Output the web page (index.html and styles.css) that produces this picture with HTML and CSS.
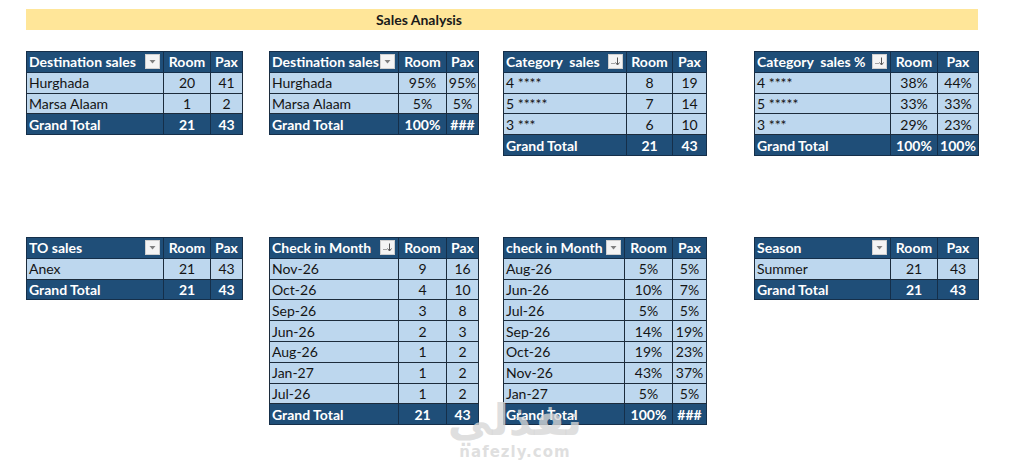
FILE: index.html
```html
<!DOCTYPE html>
<html>
<head>
<meta charset="utf-8">
<link rel="stylesheet" href="styles.css">
</head>
<body>
<div class="page">
  <div class="title"><span>Sales Analysis</span></div>

  <div class="grid top">
    <table class="pv t1">
      <colgroup><col class="c1"><col class="c2"><col class="c3"></colgroup>
      <tr class="hd"><th class="lbl"><div class="hc"><span class="ht">Destination sales</span><span class="btn"><svg width="9" height="6" viewBox="0 0 9 6"><path d="M1.5 1h6L4.5 4.5z" fill="#808080"/></svg></span></div></th><th>Room</th><th>Pax</th></tr>
      <tr><td class="l">Hurghada</td><td>20</td><td>41</td></tr>
      <tr><td class="l">Marsa Alaam</td><td>1</td><td>2</td></tr>
      <tr class="tot"><td class="l">Grand Total</td><td>21</td><td>43</td></tr>
    </table>

    <table class="pv t2">
      <colgroup><col class="c1"><col class="c2"><col class="c3"></colgroup>
      <tr class="hd"><th class="lbl"><div class="hc"><span class="ht">Destination sales</span><span class="btn"><svg width="9" height="6" viewBox="0 0 9 6"><path d="M1.5 1h6L4.5 4.5z" fill="#808080"/></svg></span></div></th><th>Room</th><th>Pax</th></tr>
      <tr><td class="l">Hurghada</td><td>95%</td><td>95%</td></tr>
      <tr><td class="l">Marsa Alaam</td><td>5%</td><td>5%</td></tr>
      <tr class="tot"><td class="l">Grand Total</td><td>100%</td><td>###</td></tr>
    </table>

    <table class="pv t3">
      <colgroup><col class="c1"><col class="c2"><col class="c3"></colgroup>
      <tr class="hd"><th class="lbl"><div class="hc"><span class="ht">Category&nbsp; sales</span><span class="btn"><svg width="11" height="11" viewBox="0 0 11 11"><path d="M1.5 7.5h1M3.5 7.5h1" stroke="#555" stroke-width="1"/><path d="M7.5 1.5v7" stroke="#555" stroke-width="1"/><path d="M5.5 6.5l2 2.5 2-2.5" fill="none" stroke="#555" stroke-width="1"/></svg></span></div></th><th>Room</th><th>Pax</th></tr>
      <tr><td class="l">4 ****</td><td>8</td><td>19</td></tr>
      <tr><td class="l">5 *****</td><td>7</td><td>14</td></tr>
      <tr><td class="l">3 ***</td><td>6</td><td>10</td></tr>
      <tr class="tot"><td class="l">Grand Total</td><td>21</td><td>43</td></tr>
    </table>

    <table class="pv t4">
      <colgroup><col class="c1"><col class="c2"><col class="c3"></colgroup>
      <tr class="hd"><th class="lbl"><div class="hc"><span class="ht">Category&nbsp; sales %</span><span class="btn"><svg width="11" height="11" viewBox="0 0 11 11"><path d="M1.5 7.5h1M3.5 7.5h1" stroke="#555" stroke-width="1"/><path d="M7.5 1.5v7" stroke="#555" stroke-width="1"/><path d="M5.5 6.5l2 2.5 2-2.5" fill="none" stroke="#555" stroke-width="1"/></svg></span></div></th><th>Room</th><th>Pax</th></tr>
      <tr><td class="l">4 ****</td><td>38%</td><td>44%</td></tr>
      <tr><td class="l">5 *****</td><td>33%</td><td>33%</td></tr>
      <tr><td class="l">3 ***</td><td>29%</td><td>23%</td></tr>
      <tr class="tot"><td class="l">Grand Total</td><td>100%</td><td>100%</td></tr>
    </table>
  </div>

  <div class="grid bottom">
    <table class="pv t5">
      <colgroup><col class="c1"><col class="c2"><col class="c3"></colgroup>
      <tr class="hd"><th class="lbl"><div class="hc"><span class="ht">TO sales</span><span class="btn"><svg width="9" height="6" viewBox="0 0 9 6"><path d="M1.5 1h6L4.5 4.5z" fill="#808080"/></svg></span></div></th><th>Room</th><th>Pax</th></tr>
      <tr><td class="l">Anex</td><td>21</td><td>43</td></tr>
      <tr class="tot"><td class="l">Grand Total</td><td>21</td><td>43</td></tr>
    </table>

    <table class="pv t6">
      <colgroup><col class="c1"><col class="c2"><col class="c3"></colgroup>
      <tr class="hd"><th class="lbl"><div class="hc"><span class="ht">Check in Month</span><span class="btn"><svg width="11" height="11" viewBox="0 0 11 11"><path d="M1.5 7.5h1M3.5 7.5h1" stroke="#555" stroke-width="1"/><path d="M7.5 1.5v7" stroke="#555" stroke-width="1"/><path d="M5.5 6.5l2 2.5 2-2.5" fill="none" stroke="#555" stroke-width="1"/></svg></span></div></th><th>Room</th><th>Pax</th></tr>
      <tr><td class="l">Nov-26</td><td>9</td><td>16</td></tr>
      <tr><td class="l">Oct-26</td><td>4</td><td>10</td></tr>
      <tr><td class="l">Sep-26</td><td>3</td><td>8</td></tr>
      <tr><td class="l">Jun-26</td><td>2</td><td>3</td></tr>
      <tr><td class="l">Aug-26</td><td>1</td><td>2</td></tr>
      <tr><td class="l">Jan-27</td><td>1</td><td>2</td></tr>
      <tr><td class="l">Jul-26</td><td>1</td><td>2</td></tr>
      <tr class="tot"><td class="l">Grand Total</td><td>21</td><td>43</td></tr>
    </table>

    <table class="pv t7">
      <colgroup><col class="c1"><col class="c2"><col class="c3"></colgroup>
      <tr class="hd"><th class="lbl"><div class="hc"><span class="ht">check in Month</span><span class="btn"><svg width="9" height="6" viewBox="0 0 9 6"><path d="M1.5 1h6L4.5 4.5z" fill="#808080"/></svg></span></div></th><th>Room</th><th>Pax</th></tr>
      <tr><td class="l">Aug-26</td><td>5%</td><td>5%</td></tr>
      <tr><td class="l">Jun-26</td><td>10%</td><td>7%</td></tr>
      <tr><td class="l">Jul-26</td><td>5%</td><td>5%</td></tr>
      <tr><td class="l">Sep-26</td><td>14%</td><td>19%</td></tr>
      <tr><td class="l">Oct-26</td><td>19%</td><td>23%</td></tr>
      <tr><td class="l">Nov-26</td><td>43%</td><td>37%</td></tr>
      <tr><td class="l">Jan-27</td><td>5%</td><td>5%</td></tr>
      <tr class="tot"><td class="l">Grand Total</td><td>100%</td><td>###</td></tr>
    </table>

    <table class="pv t8">
      <colgroup><col class="c1"><col class="c2"><col class="c3"></colgroup>
      <tr class="hd"><th class="lbl"><div class="hc"><span class="ht">Season</span><span class="btn"><svg width="9" height="6" viewBox="0 0 9 6"><path d="M1.5 1h6L4.5 4.5z" fill="#808080"/></svg></span></div></th><th>Room</th><th>Pax</th></tr>
      <tr><td class="l">Summer</td><td>21</td><td>43</td></tr>
      <tr class="tot"><td class="l">Grand Total</td><td>21</td><td>43</td></tr>
    </table>
  </div>

  <div class="watermark">
    <div class="wm-ar">نفذلي</div>
    <div class="wm-en">nafezly.com</div>
  </div>
</div>
</body>
</html>
```

FILE: styles.css
```css
html, body {
  margin: 0;
  padding: 0;
  background: #ffffff;
}

.page {
  position: relative;
  width: 1032px;
  height: 460px;
  overflow: hidden;
  font-family: Lato, "Open Sans", sans-serif;
  color: #111;
}

.title {
  margin: 9px 0 0 26px;
  width: 952px;
  height: 21px;
  background: #ffe699;
  display: flex;
  align-items: center;
  font-weight: bold;
  font-size: 14px;
  color: #1a1a1a;
}

.title span {
  margin-left: 350px;
}

.grid {
  display: grid;
  grid-template-columns: 243px 234px 251px 224px;
  align-items: start;
  padding-left: 26px;
}

.grid.top {
  margin-top: 21px;
}

.grid.bottom {
  margin-top: 81px;
}

.pv {
  border-collapse: collapse;
  table-layout: fixed;
  font-size: 14px;
  border: 1px solid #1a2a3a;
}

.pv th,
.pv td {
  height: 19.8px;
  padding: 0;
  border: 1px solid #1c2b3b;
  white-space: nowrap;
  overflow: hidden;
  text-align: center;
  line-height: 19px;
}

.pv td {
  background: #bdd7ee;
  color: #141414;
}

.pv td.l {
  text-align: left;
  padding-left: 2px;
}

.pv tr.hd th,
.pv tr.tot td {
  background: #1f4e78;
  color: #ffffff;
  font-weight: bold;
  border-color: #152f4a;
}

.pv th.lbl {
  text-align: left;
  padding-left: 2px;
}

.hc {
  display: flex;
  align-items: center;
  height: 19px;
}

.ht {
  flex: 1 1 auto;
  min-width: 0;
  overflow: hidden;
  white-space: nowrap;
}

.btn {
  flex: none;
  width: 15px;
  height: 15px;
  margin-right: 3px;
  background: #f4f4f4;
  border: 1px solid #cfcfcf;
  box-sizing: border-box;
  display: flex;
  align-items: center;
  justify-content: center;
}

/* column widths (total = table width) */
.t1, .t5 { width: 216px; }
.t1 .c1, .t5 .c1 { width: 137px; }
.t1 .c2, .t5 .c2 { width: 47px; }
.t1 .c3, .t5 .c3 { width: 32px; }

.t2, .t6 { width: 209px; }
.t2 .c1, .t6 .c1 { width: 129px; }
.t2 .c2, .t6 .c2 { width: 48px; }
.t2 .c3, .t6 .c3 { width: 32px; }

.t3, .t7 { width: 203px; }
.t3 .c1 { width: 123px; }
.t3 .c2 { width: 46px; }
.t3 .c3 { width: 34px; }
.t7 .c1 { width: 121px; }
.t7 .c2 { width: 48px; }
.t7 .c3 { width: 34px; }

.t4, .t8 { width: 224px; }
.t4 .c1, .t8 .c1 { width: 136px; }
.t4 .c2, .t8 .c2 { width: 47px; }
.t4 .c3, .t8 .c3 { width: 41px; }

.watermark {
  position: absolute;
  left: 452px;
  top: 395px;
  width: 126px;
  display: flex;
  flex-direction: column;
  align-items: center;
  color: rgba(215, 215, 215, 0.8);
  pointer-events: none;
}

.wm-ar {
  font-family: "DejaVu Sans", sans-serif;
  font-weight: bold;
  font-size: 44px;
  line-height: 50px;
}

.wm-en {
  font-family: "DejaVu Sans", sans-serif;
  font-weight: bold;
  font-size: 15px;
  line-height: 14px;
  letter-spacing: 1px;
}
```
